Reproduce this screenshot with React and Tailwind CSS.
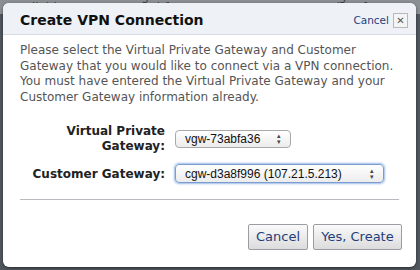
export default function App() {
  return (
    <div className="relative h-[270px] w-[420px] overflow-hidden bg-[#50575e] font-['DejaVu_Sans',sans-serif]">
      <div className="flex h-[14px] items-end gap-[70px] bg-[#8a8f94] px-[10px] text-[12px] leading-none text-[#3a3f44]">
        <span>available</span>
        <span>vgw-73abfa36</span>
        <span className="ml-[50px]">cgw-d3a8f996</span>
      </div>
      <div className="absolute left-[3px] top-[3px] flex h-[264px] w-[413px] flex-col overflow-hidden rounded-[6px] bg-white shadow-[0_1px_3px_rgba(0,0,0,0.5)]">
        <div className="flex h-[32px] items-center justify-between border-b border-[#d5dbe3] bg-[#eef2f7] pl-[17px] pr-[8px] pt-[4px]">
          <h1 className="text-[14px] font-bold text-[#111]">Create VPN Connection</h1>
          <div className="flex items-center gap-[4px]">
            <a className="text-[10.5px] text-[#1f3e7a]">Cancel</a>
            <span className="flex h-[15px] w-[15px] items-center justify-center border border-[#b5b9bf] bg-[#f4f4f4] text-[10px] leading-none text-[#555]">
              ✕
            </span>
          </div>
        </div>
        <div className="flex flex-1 flex-col px-[17px]">
          <p className="mt-[8px] text-[12px] leading-[15.5px] text-[#555]">
            Please select the Virtual Private Gateway and Customer Gateway that you would like to connect via a VPN connection. You must have entered the Virtual Private Gateway and your Customer Gateway information already.
          </p>
          <div className="mt-[19px] grid grid-cols-[145px_1fr] items-center gap-x-[10px] gap-y-[10px]">
            <label className="text-right text-[12px] font-bold leading-[15px] text-[#222]">
              Virtual Private
              <br />
              Gateway:
            </label>
            <div>
              <div className="flex h-[18px] w-[116px] items-center justify-between rounded-[4px] border border-[#a9a9a9] bg-gradient-to-b from-white to-[#ececec] px-[9px] font-['Liberation_Sans',sans-serif] text-[12px] text-[#111]">
                <span>vgw-73abfa36</span>
                <span className="text-[7px] leading-[6px] text-[#444]">▴<br />▾</span>
              </div>
            </div>
            <label className="text-right text-[12px] font-bold text-[#222]">Customer Gateway:</label>
            <div>
              <div className="flex h-[19px] w-[209px] items-center justify-between rounded-[4px] border border-[#7a9ccf] bg-gradient-to-b from-white to-[#ececec] px-[9px] font-['Liberation_Sans',sans-serif] text-[12px] text-[#111] shadow-[0_0_2px_1px_rgba(90,140,220,0.6)]">
                <span>cgw-d3a8f996 (107.21.5.213)</span>
                <span className="text-[7px] leading-[6px] text-[#444]">▴<br />▾</span>
              </div>
            </div>
          </div>
          <div className="mt-[16px] h-px bg-[#b8bcc0]" />
          <div className="-mr-[3px] mt-[24px] flex justify-end gap-[5px]">
            <button className="h-[26px] w-[60px] rounded-[2px] border border-[#9a9ea3] bg-gradient-to-b from-[#fafafa] to-[#dcdcdc] text-[13px] text-[#1f3e7a]">
              Cancel
            </button>
            <button className="h-[26px] w-[89px] rounded-[2px] border border-[#9a9ea3] bg-gradient-to-b from-[#fafafa] to-[#dcdcdc] text-[13px] text-[#1f3e7a]">
              Yes, Create
            </button>
          </div>
        </div>
      </div>
    </div>
  );
}
